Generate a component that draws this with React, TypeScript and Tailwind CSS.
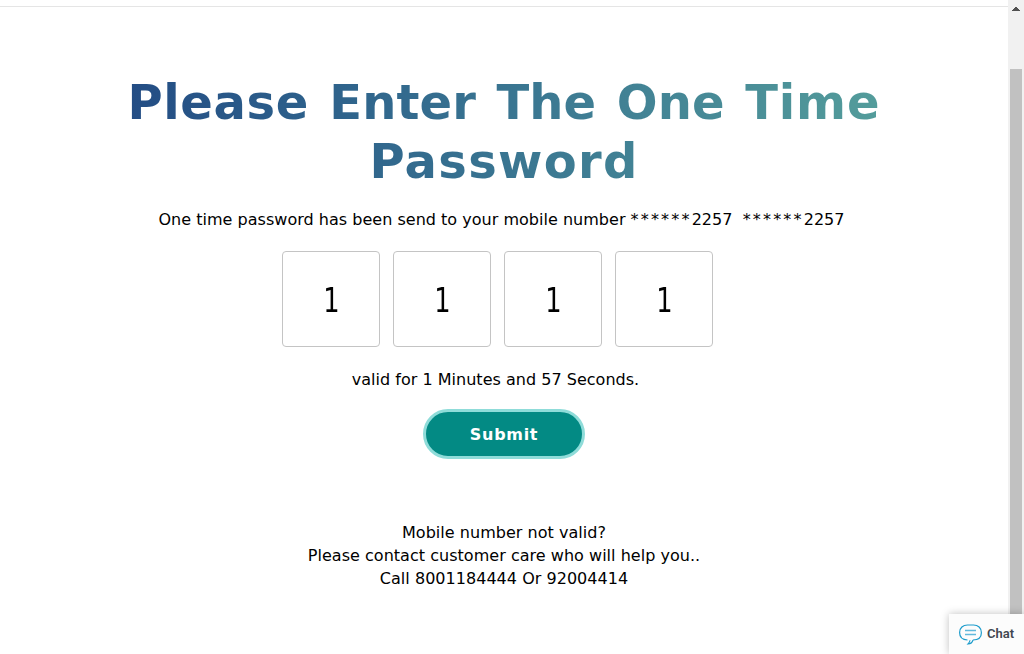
const digits = ['1', '1', '1', '1'];

function ChatWidget() {
  return (
    <div className="absolute right-0 bottom-0 flex h-10 w-[75px] items-center bg-[#fcfcfc] pl-2.5 font-['Roboto',sans-serif] text-[13px] font-semibold text-[#414750] shadow-[0_0_8px_rgba(0,0,0,0.25)]">
      <svg className="mt-px mr-[5px]" width="23" height="21" viewBox="0 0 23 21" fill="none">
        <path d="M14 16C19.5 15.8 22.4 12.8 22.4 8.7C22.4 3.8 19 1 14.5 1H8.5C4 1 .6 3.8 .6 8.5C.6 12.8 3.5 15.8 8.5 16" stroke="#1c9ccc" strokeWidth="1.2" />
        <path d="M14 16C13.5 18 12 19.8 9 20C10 19 10.8 18 11 16.2" stroke="#1c9ccc" strokeWidth="1.1" />
        <path d="M6 6.5H17M6 10.5H17" stroke="#61b9dc" strokeWidth="1.5" />
      </svg>
      Chat
    </div>
  );
}

export default function App() {
  return (
    <div className="relative flex h-[654px] w-full overflow-hidden bg-white font-['DejaVu_Sans',sans-serif] text-black">
      <main className="mt-1.5 flex flex-1 flex-col items-center border-t border-[#e5e5e5]">
        <h1 className="mt-[66px] w-[766px] bg-linear-to-r from-[#234c84] to-[#549d9b] bg-clip-text text-center text-[48px] leading-[59px] font-bold [word-spacing:3.8px] text-transparent">
          <span className="tracking-[.6px]">Please</span>{' '}
          <span className="tracking-[.1px]">Enter</span>{' '}
          <span className="tracking-[.1px]">The</span>{' '}
          <span className="tracking-[.1px]">One</span>{' '}
          <span className="tracking-[.9px]">Time</span>{' '}
          <span className="tracking-[1.3px]">Password</span>
        </h1>
        <p className="mt-[17px] mr-[5px] text-base tracking-[.02px] whitespace-pre">
          One time password has been send to your mobile number{' '}
          <span className="tracking-[2.17px]">******</span>2257{'  '}
          <span className="tracking-[2.17px]">******</span>2257
        </p>
        <div className="mt-[19px] mr-[13px] flex gap-[13px]">
          {digits.map((digit, i) => (
            <div key={i} className="flex h-24 w-[98px] items-center justify-center rounded border border-[#c4c4c4] pt-1 text-[33px]">
              <span className="scale-x-[.78]">{digit}</span>
            </div>
          ))}
        </div>
        <p className="mt-[21px] mr-[17px] text-base tracking-[.02px]">valid for 1 Minutes and 57 Seconds.</p>
        <button className="mt-[17px] h-[50px] w-[162px] rounded-full border-[3px] border-[#8fdcd9] bg-[#038a84] pt-0.5 text-base font-bold tracking-[.7px] text-white">
          Submit
        </button>
        <p className="mt-[62px] text-center text-base leading-[23px] tracking-[.03px]">
          Mobile number not valid?<br />
          Please contact customer care who will help you..<br />
          Call 8001184444 Or 92004414
        </p>
      </main>
      <aside className="flex w-4 flex-col items-center bg-[#f1f1f1]">
        <svg className="mt-[7px] shrink-0" width="8" height="4" viewBox="0 0 8 4" fill="#505050" shapeRendering="crispEdges">
          <path d="M3 0H5V1H6V2H7V3H8V4H0V3H1V2H2V1H3Z" />
        </svg>
        <div className="mt-[58px] w-3 flex-1 bg-[#c1c1c1]" />
      </aside>
      <ChatWidget />
    </div>
  );
}
